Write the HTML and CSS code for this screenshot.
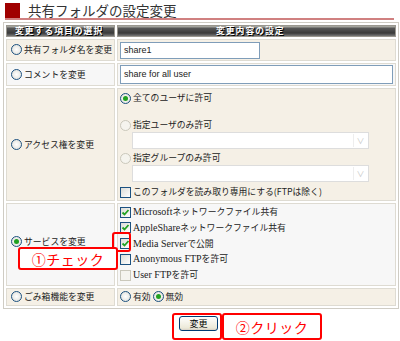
FILE: index.html
```html
<!DOCTYPE html>
<html lang="ja">
  <head>
    <meta charset="UTF-8" />
    <title>共有フォルダの設定変更</title>
    <link rel="stylesheet" href="styles.css">
  </head>
  <body>
    <div class="page">
      <!-- Title -->
      <h1 class="page-title"><span class="title-mark"></span>共有フォルダの設定変更</h1>

      <!-- Settings table -->
      <table class="settings">
        <tr>
          <th class="col-item">変更する項目の選択</th>
          <th class="col-value">変更内容の設定</th>
        </tr>
        <tr class="row-beige row-name">
          <td class="label"><span class="radio"></span>共有フォルダ名を変更</td>
          <td class="value"><div class="text-box name-box">share1</div></td>
        </tr>
        <tr class="row-white row-comment">
          <td class="label"><span class="radio"></span>コメントを変更</td>
          <td class="value"><div class="text-box comment-box">share for all user</div></td>
        </tr>
        <tr class="row-beige row-access">
          <td class="label"><span class="radio"></span>アクセス権を変更</td>
          <td class="value">
            <div class="access">
              <div class="opt opt-all"><span class="radio checked"></span>全てのユーザに許可</div>
              <div class="opt"><span class="radio disabled"></span>指定ユーザのみ許可</div>
              <div class="select-box"><span class="select-arrow">&#x2228;</span></div>
              <div class="opt"><span class="radio disabled"></span>指定グループのみ許可</div>
              <div class="select-box"><span class="select-arrow">&#x2228;</span></div>
              <div class="opt opt-ro"><span class="check"></span>このフォルダを読み取り専用にする(FTPは除く)</div>
            </div>
          </td>
        </tr>
        <tr class="row-white row-service">
          <td class="label"><span class="radio checked"></span>サービスを変更</td>
          <td class="value">
            <div class="services">
              <div class="svc"><span class="check checked"><svg viewBox="0 0 9 9"><path d="M1.5 4.5 L3.5 6.5 L7.5 2" /></svg></span><span class="latin">Microsoft</span>ネットワークファイル共有</div>
              <div class="svc"><span class="check checked"><svg viewBox="0 0 9 9"><path d="M1.5 4.5 L3.5 6.5 L7.5 2" /></svg></span><span class="latin">AppleShare</span>ネットワークファイル共有</div>
              <div class="svc"><span class="check checked"><svg viewBox="0 0 9 9"><path d="M1.5 4.5 L3.5 6.5 L7.5 2" /></svg></span><span class="latin">Media Server</span>で公開</div>
              <div class="svc"><span class="check"></span><span class="latin">Anonymous FTP</span>を許可</div>
              <div class="svc"><span class="check disabled"></span><span class="latin">User FTP</span>を許可</div>
            </div>
          </td>
        </tr>
        <tr class="row-beige row-trash">
          <td class="label"><span class="radio"></span>ごみ箱機能を変更</td>
          <td class="value"><span class="radio"></span>有効 <span class="radio checked"></span>無効</td>
        </tr>
      </table>

      <div class="actions">
        <button class="submit">変更</button>
      </div>

      <!-- Annotations -->
      <div class="mark-box mark-check"></div>
      <div class="note note-check">①チェック</div>
      <div class="mark-box mark-button"></div>
      <div class="note note-click">②クリック</div>
    </div>
  </body>
</html>
```

FILE: styles.css
```css
/* Base */
body { margin: 0; background: #fff; font-family: "Noto Sans CJK JP", "Noto Sans", sans-serif; color: #222; }
.page { position: relative; width: 400px; height: 341px; padding: 3px 0 0 3px; box-sizing: border-box; }

/* Title */
.page-title { display: flex; align-items: center; gap: 8px; margin: 0 6px 2px 2px; height: 15px; font-size: 13.5px; font-weight: normal; line-height: 15px; color: #333; border-bottom: 2px solid #d08080; }
.title-mark { width: 15px; height: 15px; background: #a00000; }

/* Table */
.settings { width: 392px; border-collapse: separate; border-spacing: 2px; border: 1px solid #cfccc4; background: #fff; font-size: 8.8px; line-height: 12px; }
.settings th { height: 10px; padding: 0; font-size: 8.8px; line-height: 10px; font-weight: bold; color: #fff; text-shadow: 1px 1px 0 #000; background: linear-gradient(#b8b8b0, #555 25%, #3a3a3a 70%, #777); border: 1px solid #9a978f; letter-spacing: 1px; }
.settings th.col-item { width: 106px; text-align: left; padding-left: 8px; }
.settings th.col-value { text-align: left; padding-left: 98px; }
.settings td { border: 1px solid #dedbd2; padding: 0 2px; vertical-align: middle; }
.settings td.label { padding-left: 4px; white-space: nowrap; }
.row-beige td { background: #f5f0e6; }
.row-white td { background: #f7f7f7; }

.row-name td { height: 20px; }
.row-comment td { height: 21px; }
.row-trash td { height: 16px; }
.row-service td.label { padding-bottom: 6px; }

/* Inputs */
.text-box { border: 1px solid #7f9db9; background: #fff; font-family: "Liberation Sans", sans-serif; font-size: 9px; padding-left: 3px; box-sizing: border-box; }
.name-box { width: 140px; height: 17px; line-height: 15px; }
.comment-box { width: 273px; height: 19px; line-height: 17px; }

.access { display: flex; flex-direction: column; padding: 2px 0 1px; }
.opt { display: flex; align-items: center; height: 14px; }
.opt-all { margin-bottom: 13px; }
.opt-ro { margin-top: 1px; }
.select-box { position: relative; width: 237px; height: 17px; margin: 0 0 2px 12px; border: 1px solid #ddd; background: #fff; box-sizing: border-box; }
.select-arrow { position: absolute; right: 1px; top: 1px; width: 13px; height: 13px; font-size: 8px; line-height: 13px; text-align: center; color: #c8c8c8; border-left: 1px solid #eee; }

.services { display: flex; flex-direction: column; padding: 1px 0 3px; gap: 1.75px; }
.svc { display: flex; align-items: center; height: 14px; color: #222; }
.latin { font-family: "Liberation Serif", serif; font-size: 10px; }

/* Radio and checkbox */
.radio { display: inline-block; width: 9px; height: 9px; margin-right: 2px; border: 1px solid #1c5180; border-radius: 50%; background: radial-gradient(#fff, #dcdcd6); position: relative; vertical-align: -2px; flex: none; }
.radio.checked::after { content: ""; position: absolute; left: 2px; top: 2px; width: 5px; height: 5px; border-radius: 50%; background: #21a121; }
.radio.disabled { border-color: #cac8bb; background: #f5f4ee; }
.check { display: inline-block; width: 9px; height: 9px; margin-right: 2px; border: 1px solid #1c5180; background: linear-gradient(135deg, #dcdcd7, #fff); flex: none; }
.check svg { display: block; width: 9px; height: 9px; }
.check path { fill: none; stroke: #21a121; stroke-width: 1.8; }
.check.disabled { border-color: #cac8bb; background: #f5f4ee; }

/* Button */
.actions { display: flex; padding: 7px 0 0 176px; }
.submit { width: 39px; height: 15px; padding: 0; font-family: "Noto Sans CJK JP", sans-serif; font-size: 9px; line-height: 12px; color: #000; border: 1px solid #003c74; border-radius: 3px; background: linear-gradient(#fff, #ece9d8 85%, #d6d0c5); }

/* Red annotations */
.mark-box { position: absolute; border: 2px solid #f00; border-radius: 3px; }
.mark-check { left: 112px; top: 232px; width: 15px; height: 16px; }
.mark-button { left: 172px; top: 313px; width: 46px; height: 23px; }
.note { position: absolute; display: flex; align-items: center; justify-content: center; background: #fff; border: 2px solid #f00; border-radius: 3px; color: #f00; font-size: 14px; letter-spacing: 0.5px; }
.note-check { left: 18px; top: 247px; width: 96px; height: 19px; }
.note-click { left: 222px; top: 313px; width: 96px; height: 23px; }
```
